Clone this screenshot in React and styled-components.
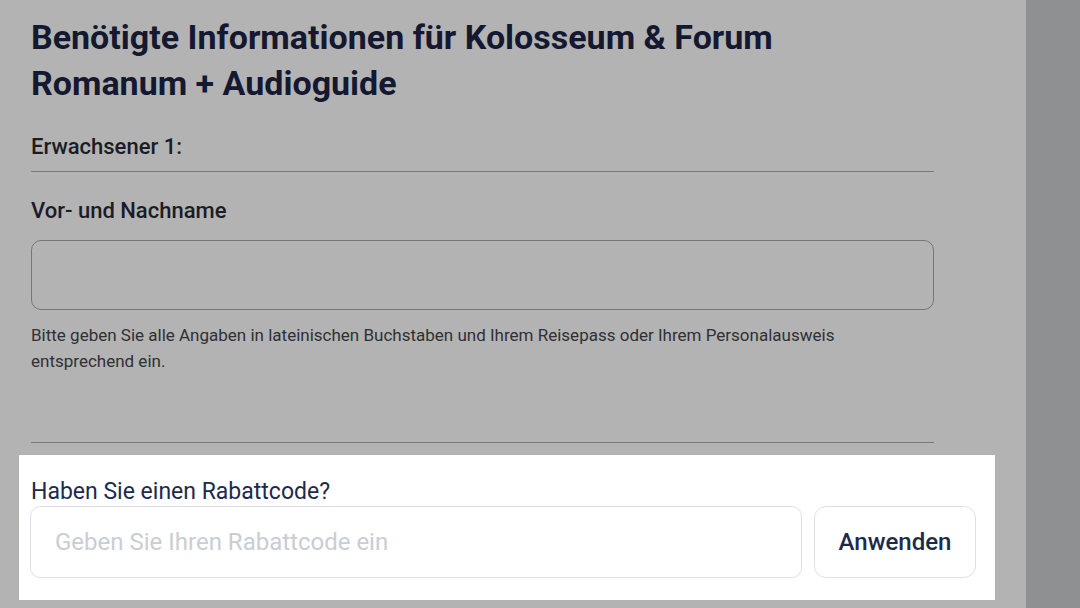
import React from "react";
import styled, { createGlobalStyle } from "styled-components";

const GlobalStyle = createGlobalStyle`
  html, body {
    margin: 0;
    padding: 0;
    background: #b3b3b3;
  }
  * {
    box-sizing: border-box;
  }
`;

export default function App() {
  return (
    <>
      <GlobalStyle />
      <Page>
        <Main>
          <Details>
            <Heading>
              Benötigte Informationen für Kolosseum &amp; Forum
              <br />
              Romanum + Audioguide
            </Heading>
            <PersonTitle>Erwachsener 1:</PersonTitle>
            <FieldLabel>Vor- und Nachname</FieldLabel>
            <NameInput />
            <Hint>
              Bitte geben Sie alle Angaben in lateinischen Buchstaben und Ihrem Reisepass oder Ihrem Personalausweis
              entsprechend ein.
            </Hint>
          </Details>
          <Spotlight>
            <CouponLabel>Haben Sie einen Rabattcode?</CouponLabel>
            <CouponRow>
              <CouponInput placeholder="Geben Sie Ihren Rabattcode ein" />
              <ApplyButton>Anwenden</ApplyButton>
            </CouponRow>
          </Spotlight>
        </Main>
        <SideBar />
      </Page>
    </>
  );
}

const Page = styled.div`
  display: flex;
  width: 1080px;
  height: 608px;
  overflow: hidden;
  font-family: Roboto, "Liberation Sans", sans-serif;
  background: #b3b3b3;
`;

const Main = styled.div`
  flex: 0 0 1026px;
  padding-left: 19px;
`;

const SideBar = styled.div`
  flex: 1;
  background: #8f9092;
`;

const Details = styled.div`
  width: 903px;
  margin-left: 12px;
  padding: 14px 0 68px;
  border-bottom: 1.5px solid #7a7a7a;
`;

const Heading = styled.h1`
  margin: 0;
  font-size: 34px;
  line-height: 46px;
  font-weight: 700;
  color: #141830;
`;

const PersonTitle = styled.div`
  margin-top: 28px;
  padding-bottom: 11px;
  border-bottom: 1.5px solid #7a7a7a;
  font-size: 22px;
  line-height: 26px;
  font-weight: 500;
  color: #1a1c26;
`;

const FieldLabel = styled.div`
  margin-top: 26px;
  font-size: 22px;
  line-height: 26px;
  font-weight: 500;
  color: #1a1c26;
`;

const NameInput = styled.input`
  display: block;
  width: 100%;
  height: 70px;
  margin-top: 15.5px;
  border: 1.5px solid #777;
  border-radius: 10px;
  background: transparent;
  outline: none;
`;

const Hint = styled.p`
  margin: 12px 0 0;
  font-size: 17px;
  line-height: 26px;
  color: #2f3033;
`;

const Spotlight = styled.div`
  width: 976px;
  margin-top: 12px;
  padding: 24px 19px 22px 11px;
  background: #ffffff;
`;

const CouponLabel = styled.div`
  padding-left: 1px;
  font-size: 23px;
  line-height: 26px;
  color: #1e2a4a;
`;

const CouponRow = styled.div`
  display: flex;
  gap: 12px;
  margin-top: 1px;
`;

const CouponInput = styled.input`
  flex: 1;
  height: 72px;
  padding: 0 24px;
  border: 1.5px solid #dde1e7;
  border-radius: 10px;
  font-family: inherit;
  font-size: 24px;
  color: #1e2a4a;
  outline: none;

  &::placeholder {
    color: #c9cdd4;
  }
`;

const ApplyButton = styled.button`
  flex: 0 0 162px;
  height: 72px;
  border: 1.5px solid #dde1e7;
  border-radius: 12px;
  background: #ffffff;
  font-family: inherit;
  font-size: 24px;
  font-weight: 500;
  color: #1e2a4a;
  cursor: pointer;
`;
